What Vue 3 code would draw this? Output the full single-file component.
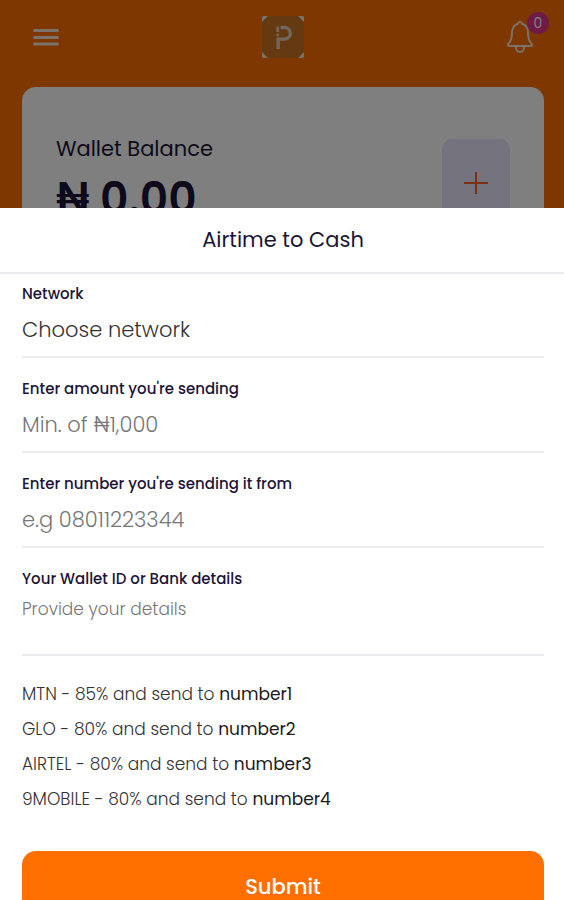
<template>
  <div class="page">
    <header class="topbar">
      <button class="icon-btn" type="button" aria-label="Menu">
        <svg width="28" height="20" viewBox="0 0 28 20" fill="none" stroke="#f6e4d4" stroke-width="2.800" stroke-linecap="round">
          <path d="M2.500 3.500h23M2.500 10.500h23M2.500 17h23" />
        </svg>
      </button>
      <svg class="logo" width="42" height="42" viewBox="0 0 42 42">
        <rect width="42" height="42" rx="2" fill="#cc7420" />
        <path d="M1 0h5L0 6V1zM41 0l1 1v5l-6-6zM1 42l-1-1v-5l6 6zM41 42h-5l6-6v5z" fill="#f4e2d4" />
        <path d="M18.500 11.500h4a5.800 5.800 0 0 1 0 11.600H16.200V33" fill="none" stroke="#e4cdbb" stroke-width="3.400" />
        <path d="M14.500 10.500h2.600v5.500h-2.600zM14.500 17.400h2.600v2.800h-2.600z" fill="#e4cdbb" />
      </svg>
      <button class="icon-btn bell" type="button" aria-label="Notifications">
        <svg width="28" height="34" viewBox="0 0 28 34" fill="none" stroke="#f6e4d4" stroke-width="2" stroke-linejoin="round" stroke-linecap="round">
          <path d="M14 1.800c-1.200 0-1.900.8-2.200 1.900C8 5 6 8.200 6 12.500c0 5.500-1 8.700-3.600 11.300-.9 1-.6 2.200.8 2.200h21.600c1.400 0 1.700-1.200.8-2.200C23 21.200 22 18 22 12.500c0-4.300-2-7.500-5.800-8.800-.3-1.100-1-1.900-2.200-1.900z" />
          <path d="M9.800 27c0 3 1.800 5 4.200 5s4.200-2 4.200-5" />
        </svg>
        <span class="badge">0</span>
      </button>
    </header>

    <section class="wallet">
      <div>
        <p class="wallet-label">Wallet Balance</p>
        <p class="wallet-amount">₦ 0.00</p>
      </div>
      <button class="add-btn" type="button" aria-label="Add money">
        <svg width="24" height="24" viewBox="0 0 24 24" fill="none" stroke="#f8622c" stroke-width="2">
          <path d="M12 1v22M0 12h24" />
        </svg>
      </button>
    </section>
  </div>

  <div class="overlay">
    <div class="sheet" role="dialog" aria-labelledby="sheet-title">
      <h1 id="sheet-title" class="sheet-title">Airtime to Cash</h1>
      <form class="form" @submit.prevent>
        <div class="field">
          <label for="network">Network</label>
          <select id="network" v-model="form.network">
            <option value="">Choose network</option>
            <option v-for="rate in rates" :key="rate.name" :value="rate.name">{{ rate.name }}</option>
          </select>
        </div>
        <div class="field">
          <label for="amount">Enter amount you're sending</label>
          <input id="amount" v-model="form.amount" type="text" inputmode="numeric" placeholder="Min. of ₦1,000">
        </div>
        <div class="field">
          <label for="phone">Enter number you're sending it from</label>
          <input id="phone" v-model="form.phone" type="tel" placeholder="e.g 08011223344">
        </div>
        <div class="field">
          <label for="details">Your Wallet ID or Bank details</label>
          <textarea id="details" v-model="form.details" placeholder="Provide your details"></textarea>
        </div>
        <ul class="rates">
          <li v-for="rate in rates" :key="rate.name">
            {{ rate.name }} - {{ rate.percent }}% and send to <b>{{ rate.sendTo }}</b>
          </li>
        </ul>
        <button class="submit" type="submit">Submit</button>
      </form>
    </div>
  </div>
</template>

<script setup>
import { reactive } from 'vue'

const form = reactive({
  network: '',
  amount: '',
  phone: '',
  details: ''
})

const rates = [
  { name: 'MTN', percent: 85, sendTo: 'number1' },
  { name: 'GLO', percent: 80, sendTo: 'number2' },
  { name: 'AIRTEL', percent: 80, sendTo: 'number3' },
  { name: '9MOBILE', percent: 80, sendTo: 'number4' }
]
</script>

<style>
body {
  margin: 0;
  font-family: Poppins, Inter, sans-serif;
  background: #fff;
}
</style>

<style scoped>
* {
  box-sizing: border-box;
}

button,
input,
select,
textarea {
  font-family: inherit;
}

.page {
  height: 100vh;
  overflow: hidden;
  padding: 0 20px 0 22px;
  background: #ff6f00;
}

.topbar {
  display: flex;
  align-items: center;
  justify-content: space-between;
  height: 74px;
  padding: 0 10px;
}

.icon-btn {
  position: relative;
  display: flex;
  padding: 0;
  border: none;
  background: none;
}

.badge {
  position: absolute;
  top: -8px;
  right: -15px;
  width: 22px;
  height: 22px;
  border-radius: 50%;
  background: #dc3690;
  color: #fff;
  font-size: 14px;
  line-height: 22px;
  text-align: center;
}

.wallet {
  display: flex;
  justify-content: space-between;
  margin-top: 13px;
  padding: 48px 34px;
  border-radius: 14px;
  background: #fff;
  color: #1c1537;
}

.wallet-label {
  margin: 0;
  font-size: 21px;
  line-height: 28px;
  font-weight: 400;
}

.wallet-amount {
  margin: 8px 0 0;
  font-size: 44px;
  line-height: 56px;
  font-weight: 600;
}

.add-btn {
  display: flex;
  align-items: center;
  justify-content: center;
  width: 68px;
  height: 88px;
  margin-top: 4px;
  border: none;
  border-radius: 10px;
  background: #ebe6fc;
}

.overlay {
  position: fixed;
  inset: 0;
  overflow-y: auto;
  scrollbar-width: none;
  padding-top: 208px;
  background: rgba(0, 0, 0, 0.5);
}

.sheet {
  background: #fff;
}

.sheet-title {
  margin: 0;
  padding: 18px 20px 18px 22px;
  border-bottom: 2px solid #ececee;
  color: #1c1537;
  font-size: 21px;
  line-height: 28px;
  font-weight: 400;
  text-align: center;
}

.form {
  padding: 10px 20px 34px 22px;
}

.field {
  margin-bottom: 21px;
}

.field label {
  display: block;
  color: #1c1537;
  font-size: 15px;
  line-height: 20px;
  font-weight: 500;
}

.field input,
.field select,
.field textarea {
  display: block;
  width: 100%;
  height: 54px;
  padding: 0 0 2px;
  border: none;
  border-bottom: 2px solid #ececee;
  border-radius: 0;
  outline: none;
  appearance: none;
  background: transparent;
  color: #333;
  font-size: 21px;
  font-weight: 300;
}

.field textarea {
  height: 67px;
  padding-top: 8px;
  font-size: 17px;
  line-height: 24px;
  resize: none;
}

.field ::placeholder {
  color: #777;
  opacity: 1;
}

.rates {
  margin: 0 0 34px;
  padding: 0;
  list-style: none;
  color: #333;
  font-size: 17px;
  line-height: 35px;
  font-weight: 300;
}

.rates b {
  color: #1a1a1a;
  font-weight: 400;
}

.submit {
  display: block;
  width: 100%;
  height: 70px;
  border: none;
  border-radius: 14px;
  background: #ff6f00;
  color: #fff;
  font-size: 21px;
  font-weight: 500;
}
</style>
